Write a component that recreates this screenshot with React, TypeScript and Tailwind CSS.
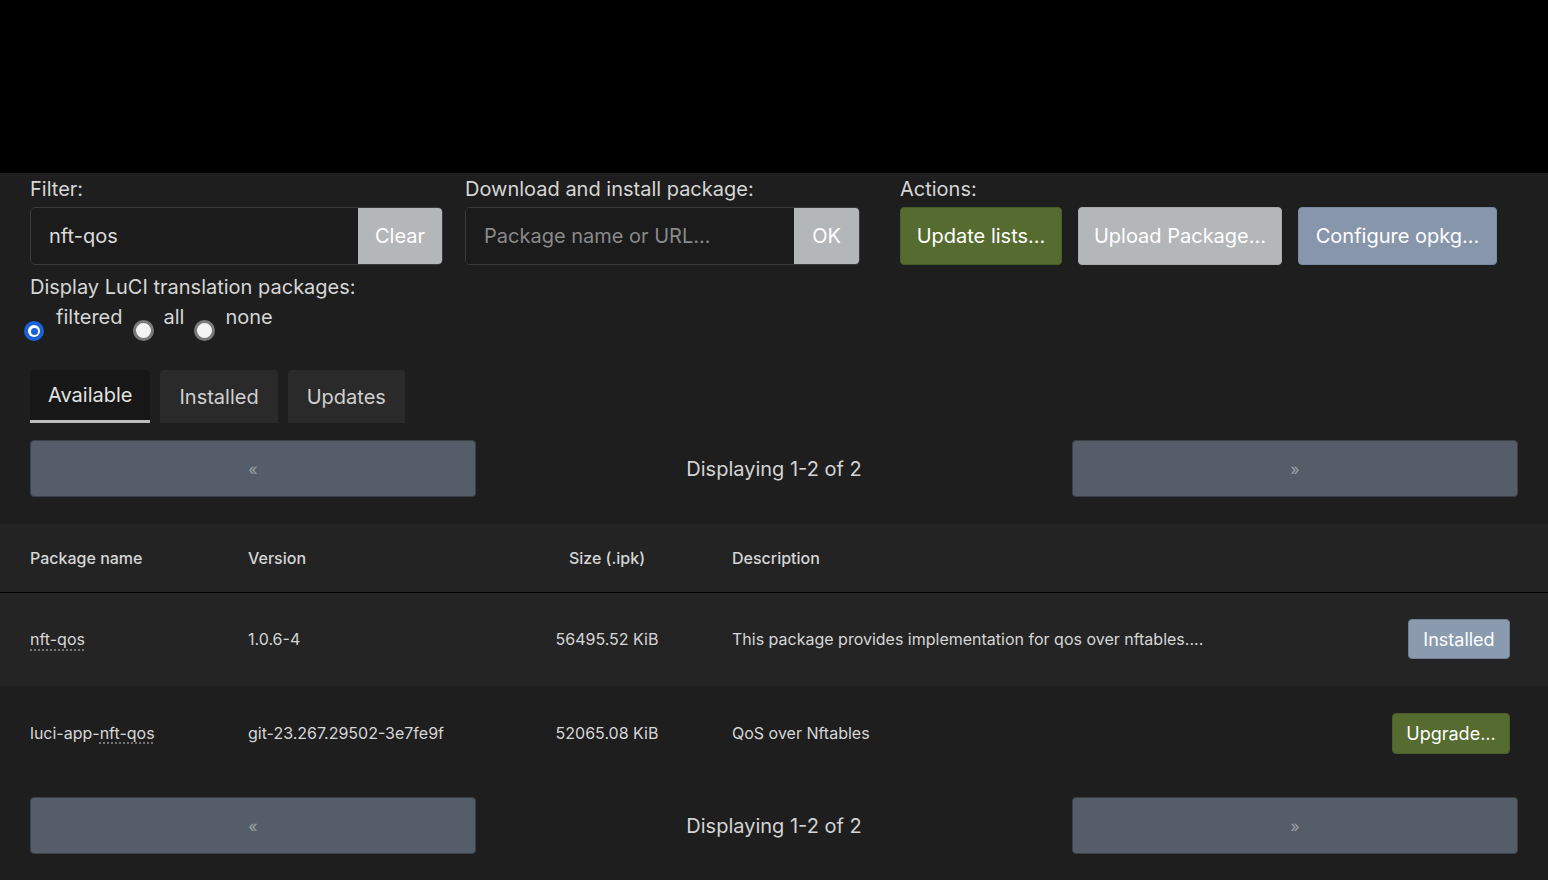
import { useState } from 'react';

type Pkg = {
  name: string;
  prefix?: string;
  version: string;
  size: string;
  description: string;
  action: 'installed' | 'upgrade';
};

const packages: Pkg[] = [
  {
    name: 'nft-qos',
    version: '1.0.6-4',
    size: '56495.52 KiB',
    description: 'This package provides implementation for qos over nftables....',
    action: 'installed',
  },
  {
    name: 'nft-qos',
    prefix: 'luci-app-',
    version: 'git-23.267.29502-3e7fe9f',
    size: '52065.08 KiB',
    description: 'QoS over Nftables',
    action: 'upgrade',
  },
];

function Radio({ checked, label, onClick }: { checked: boolean; label: string; onClick: () => void }) {
  return (
    <label className="flex items-end cursor-pointer" onClick={onClick}>
      {checked ? (
        <span className="w-[20px] h-[20px] rounded-full bg-[#1a62d6] flex items-center justify-center mr-[12px] mb-[-12px]">
          <span className="w-[12px] h-[12px] rounded-full bg-white flex items-center justify-center">
            <span className="w-[7px] h-[7px] rounded-full bg-[#1a62d6]" />
          </span>
        </span>
      ) : (
        <span className="w-[21px] h-[21px] rounded-full bg-[#f4f4f4] border-[3px] border-[#7a7a7a] mr-[10px] mb-[-12px]" />
      )}
      <span className="text-[20px] leading-[24px] mr-[10px]">{label}</span>
    </label>
  );
}

function Pager() {
  return (
    <div className="flex items-center justify-between">
      <button className="w-[446px] h-[57px] bg-[#555e68] border border-[#3c4148] rounded-[4px] text-[#9aa0a6] text-[16px]">
        «
      </button>
      <div className="text-[20px] text-[#d4d4d4]">Displaying 1-2 of 2</div>
      <button className="w-[446px] h-[57px] bg-[#555e68] border border-[#3c4148] rounded-[4px] text-[#9aa0a6] text-[16px]">
        »
      </button>
    </div>
  );
}

export default function App() {
  const [filter, setFilter] = useState('nft-qos');
  const [mode, setMode] = useState('filtered');
  const [tab, setTab] = useState('Available');

  return (
    <div className="min-h-screen bg-[#1e1e1e] text-[#d6d6d6] font-['Inter','Roboto',sans-serif]">
      <div className="h-[173px] bg-black" />

      <div className="px-[30px] pt-[4px]">
        {/* filter / install / actions */}
        <div className="flex">
          <div className="w-[413px]">
            <div className="text-[20px] leading-[24px] mb-[6px]">Filter:</div>
            <div className="flex h-[58px] border border-[#3b3b3b] rounded-[5px] overflow-hidden">
              <input
                value={filter}
                onChange={(e) => setFilter(e.target.value)}
                className="flex-1 min-w-0 bg-[#1b1b1b] px-[18px] text-[20px] text-[#dcdcdc] outline-none"
              />
              <button className="w-[84px] bg-[#b4b7b8] text-white text-[20px]">Clear</button>
            </div>
          </div>

          <div className="w-[395px] ml-[22px]">
            <div className="text-[20px] leading-[24px] mb-[6px]">Download and install package:</div>
            <div className="flex h-[58px] border border-[#3b3b3b] rounded-[5px] overflow-hidden">
              <input
                placeholder="Package name or URL..."
                className="flex-1 min-w-0 bg-[#1b1b1b] px-[18px] text-[20px] text-[#dcdcdc] placeholder-[#8a8a8a] outline-none"
              />
              <button className="w-[65px] bg-[#b4b7b8] text-white text-[20px]">OK</button>
            </div>
          </div>

          <div className="ml-[40px]">
            <div className="text-[20px] leading-[24px] mb-[6px]">Actions:</div>
            <div className="flex gap-[16px]">
              <button className="w-[162px] h-[58px] bg-[#556b2f] border border-[#4a5d2a] rounded-[4px] text-white text-[20px]">
                Update lists...
              </button>
              <button className="w-[204px] h-[58px] bg-[#b4b7b8] border border-[#a8abac] rounded-[4px] text-white text-[20px]">
                Upload Package...
              </button>
              <button className="w-[199px] h-[58px] bg-[#8796ab] border border-[#7b8aa0] rounded-[4px] text-white text-[20px]">
                Configure opkg...
              </button>
            </div>
          </div>
        </div>

        {/* translation packages */}
        <div className="mt-[10px] text-[20px] leading-[24px]">Display LuCI translation packages:</div>
        <div className="flex mt-[6px] ml-[-6px] pb-[12px]">
          <Radio checked={mode === 'filtered'} label="filtered" onClick={() => setMode('filtered')} />
          <Radio checked={mode === 'all'} label="all" onClick={() => setMode('all')} />
          <Radio checked={mode === 'none'} label="none" onClick={() => setMode('none')} />
        </div>

        {/* tabs */}
        <div className="flex gap-[10px] mt-[29px]">
          {['Available', 'Installed', 'Updates'].map((t) => (
            <button
              key={t}
              onClick={() => setTab(t)}
              className={
                tab === t
                  ? 'h-[53px] px-[18px] bg-[#171717] border-b-[3px] border-[#bdbdbd] rounded-t-[4px] text-[20px] text-[#e2e2e2]'
                  : 'h-[53px] px-[19px] bg-[#2a2a2a] rounded-t-[4px] text-[20px] text-[#d0d0d0]'
              }
            >
              {t}
            </button>
          ))}
        </div>

        <div className="mt-[17px]">
          <Pager />
        </div>
      </div>

      {/* package table */}
      <table className="w-full mt-[27px] text-[16px] border-collapse">
        <thead>
          <tr className="h-[68px] bg-[#232323] border-b border-black text-left">
            <th className="pl-[30px] w-[248px] font-medium">Package name</th>
            <th className="w-[278px] font-medium">Version</th>
            <th className="w-[162px] font-medium text-center">Size (.ipk)</th>
            <th className="pl-[44px] font-medium">Description</th>
            <th className="w-[160px]" />
          </tr>
        </thead>
        <tbody>
          {packages.map((p, i) => (
            <tr key={i} className={i % 2 === 0 ? 'h-[94px] bg-[#242424]' : 'h-[94px] bg-[#1e1e1e]'}>
              <td className="pl-[30px]">
                {p.prefix}
                <span className="underline decoration-dotted decoration-[#8a8a8a] underline-offset-[4px]">{p.name}</span>
              </td>
              <td>{p.version}</td>
              <td className="text-center">{p.size}</td>
              <td className="pl-[44px]">{p.description}</td>
              <td className="pr-[38px] text-right">
                {p.action === 'installed' ? (
                  <button className="w-[102px] h-[40px] bg-[#8a9bb0] border border-[#6f7f93] rounded-[4px] text-white text-[18px]">
                    Installed
                  </button>
                ) : (
                  <button className="w-[118px] h-[41px] bg-[#556b2f] border border-[#4a5d2a] rounded-[4px] text-white text-[18px]">
                    Upgrade...
                  </button>
                )}
              </td>
            </tr>
          ))}
        </tbody>
      </table>

      <div className="px-[30px] pt-[17px] pb-[26px]">
        <Pager />
      </div>
    </div>
  );
}
